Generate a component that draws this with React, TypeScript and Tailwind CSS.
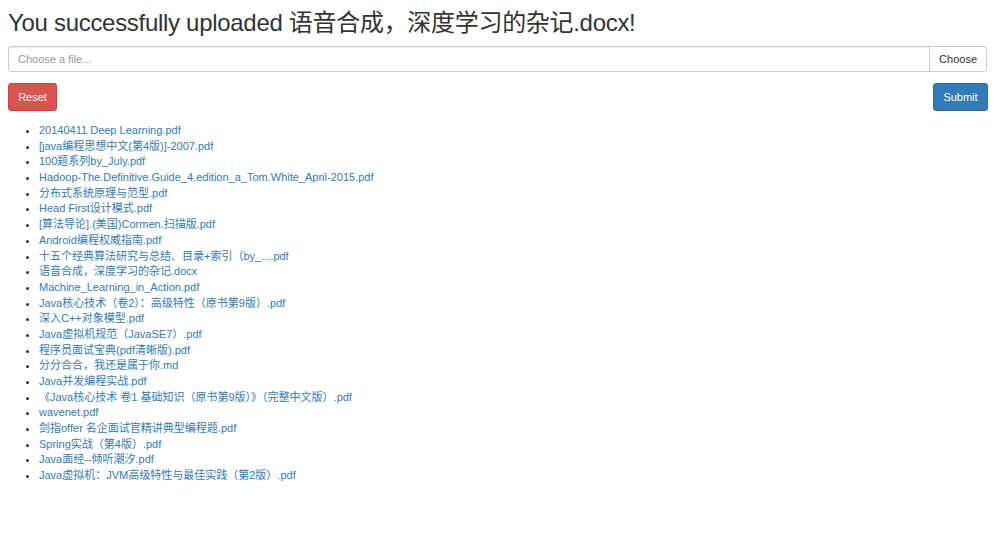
import React from "react"

const files = [
  "20140411 Deep Learning.pdf",
  "[java编程思想中文(第4版)]-2007.pdf",
  "100题系列by_July.pdf",
  "Hadoop-The.Definitive.Guide_4.edition_a_Tom.White_April-2015.pdf",
  "分布式系统原理与范型.pdf",
  "Head First设计模式.pdf",
  "[算法导论].(美国)Cormen.扫描版.pdf",
  "Android编程权威指南.pdf",
  "十五个经典算法研究与总结、目录+索引（by_....pdf",
  "语音合成，深度学习的杂记.docx",
  "Machine_Learning_in_Action.pdf",
  "Java核心技术（卷2）：高级特性（原书第9版）.pdf",
  "深入C++对象模型.pdf",
  "Java虚拟机规范（JavaSE7）.pdf",
  "程序员面试宝典(pdf清晰版).pdf",
  "分分合合，我还是属于你.md",
  "Java并发编程实战.pdf",
  "《Java核心技术 卷1 基础知识（原书第9版）》（完整中文版）.pdf",
  "wavenet.pdf",
  "剑指offer 名企面试官精讲典型编程题.pdf",
  "Spring实战（第4版）.pdf",
  "Java面经--倾听潮汐.pdf",
  "Java虚拟机：JVM高级特性与最佳实践（第2版）.pdf",
]

export default function App() {
  return (
    <div className="min-h-[538px] bg-white px-2 pt-[9px] font-['Liberation_Sans','Noto_Sans_CJK_SC',sans-serif] text-[#333]">
      {/* Heading */}
      <h1 className="text-[24px] leading-[28px] font-normal tracking-[-0.3px]">
        You successfully uploaded 语音合成，深度学习的杂记.docx!
      </h1>

      {/* File input group */}
      <div className="mt-[9px] flex h-[26px] w-[979px]">
        <input
          type="text"
          placeholder="Choose a file..."
          className="flex-1 rounded-l-[3px] border border-[#ccc] px-[9px] text-[11px] text-[#555] shadow-[inset_0_1px_1px_rgba(0,0,0,0.075)] outline-none placeholder:text-[#999]"
        />
        <button className="-ml-px rounded-r-[3px] border border-[#ccc] bg-white px-[9px] text-[11px] text-[#333]">
          Choose
        </button>
      </div>

      {/* Actions */}
      <div className="mt-[11px] flex w-[980px] justify-between">
        <button className="h-[28px] w-[49px] rounded-[3px] border border-[#d43f3a] bg-[#d9534f] text-[11px] text-white">
          Reset
        </button>
        <button className="h-[28px] w-[55px] rounded-[3px] border border-[#2e6da4] bg-[#337ab7] text-[11px] text-white">
          Submit
        </button>
      </div>

      {/* Uploaded files */}
      <ul className="mt-[12px] list-disc pl-[31px] text-[11px] leading-[15.68px] text-[#337ab7] marker:text-[#333]">
        {files.map((f) => (
          <li key={f}>
            <a href="#" className="hover:underline">
              {f}
            </a>
          </li>
        ))}
      </ul>
    </div>
  )
}
